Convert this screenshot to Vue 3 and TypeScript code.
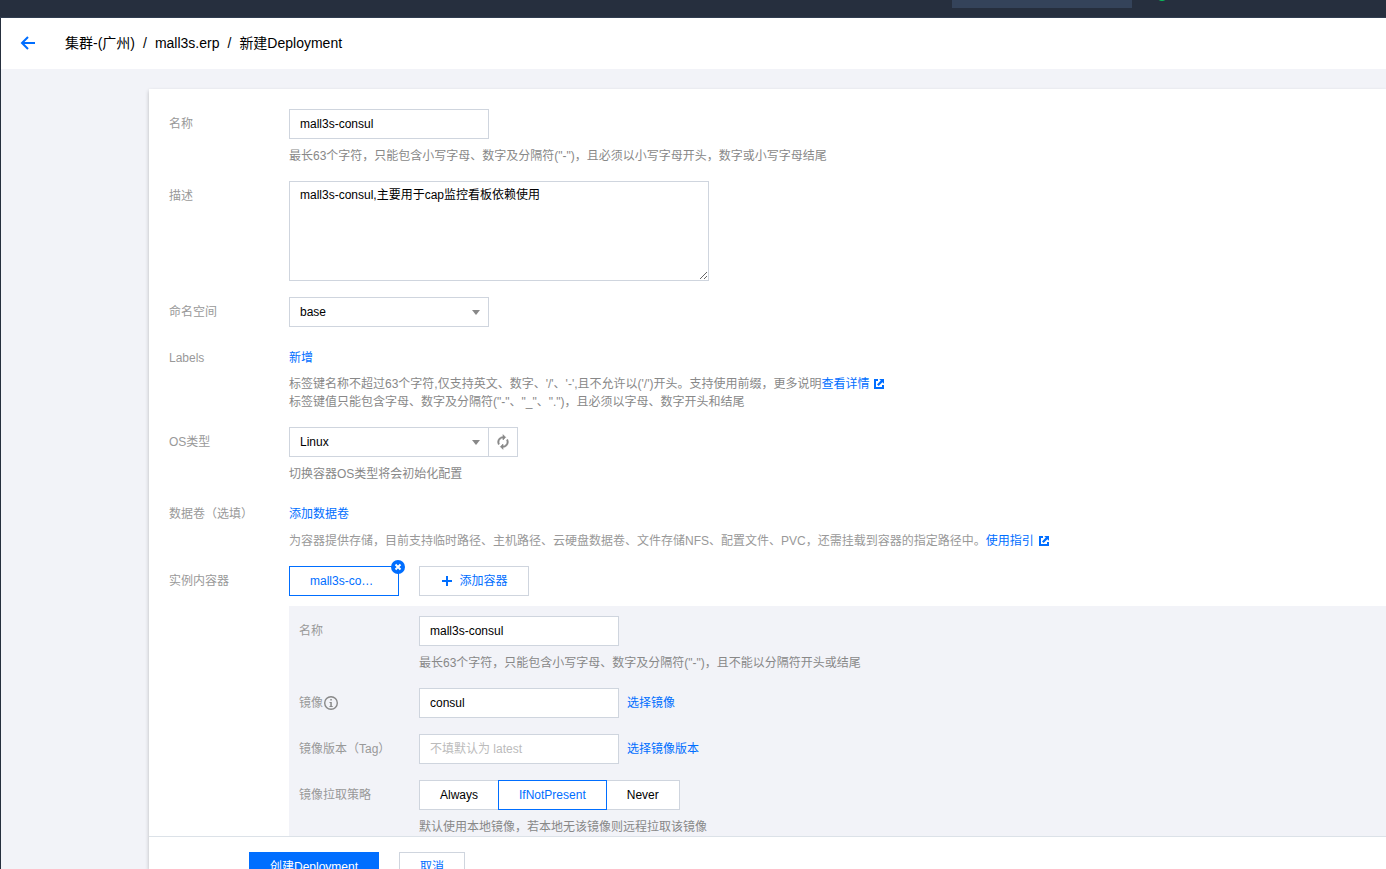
<script setup lang="ts">
import { ref } from 'vue'

const name = ref('mall3s-consul')
const description = ref('mall3s-consul,主要用于cap监控看板依赖使用')
const namespace = ref('base')
const osType = ref('Linux')
const containerName = ref('mall3s-consul')
const image = ref('consul')
const tag = ref('')
const pullPolicies: string[] = ['Always', 'IfNotPresent', 'Never']
const pullPolicy = ref('IfNotPresent')
</script>

<template>
  <div class="page">
    <div class="topbar">
      <div class="topbar-search"></div>
      <svg class="topbar-badge" width="12" height="2" viewBox="0 0 12 2" aria-hidden="true">
        <circle cx="6" cy="-5" r="6" fill="#0abf5b" />
      </svg>
    </div>

    <div class="shell">
      <header class="header">
        <button type="button" class="back" aria-label="返回">
          <svg width="16" height="16" viewBox="0 0 16 16" fill="none" stroke="#006eff" stroke-width="2">
            <path d="M8 2 2 8l6 6M2 8h13" />
          </svg>
        </button>
        <nav class="crumbs">
          <span>集群-(广州)</span><span class="slash">/</span><span>mall3s.erp</span><span class="slash">/</span><span>新建Deployment</span>
        </nav>
      </header>

      <main class="main">
        <form class="card" @submit.prevent>
          <div class="scroll">
            <div class="row">
              <label class="label" for="name">名称</label>
              <div class="field">
                <input id="name" v-model="name" class="input" type="text" />
                <p class="hint">最长63个字符，只能包含小写字母、数字及分隔符("-")，且必须以小写字母开头，数字或小写字母结尾</p>
              </div>
            </div>

            <div class="row">
              <label class="label" for="description">描述</label>
              <div class="field">
                <textarea id="description" v-model="description" class="textarea"></textarea>
              </div>
            </div>

            <div class="row">
              <label class="label" for="namespace">命名空间</label>
              <div class="field">
                <div class="select-wrap">
                  <select id="namespace" v-model="namespace" class="input select">
                    <option>base</option>
                  </select>
                  <svg class="caret" width="8" height="5" viewBox="0 0 8 5" aria-hidden="true"><path d="M0 0h8L4 5z" fill="#888" /></svg>
                </div>
              </div>
            </div>

            <div class="row">
              <span class="label">Labels</span>
              <div class="field">
                <div class="line"><a href="#">新增</a></div>
                <p class="hint hint-tight">
                  标签键名称不超过63个字符,仅支持英文、数字、'/'、'-',且不允许以('/')开头。支持使用前缀，更多说明<a href="#">查看详情<svg class="ext" width="10" height="10" viewBox="0 0 10 10" aria-hidden="true"><path d="M4 0H0v10h10V6H8v2H2V2h2zM5.200 0H10v4.800L8.400 3.200 4.600 7 3 5.400 6.800 1.600z" fill="#006eff" /></svg></a><br />
                  标签键值只能包含字母、数字及分隔符("-"、"_"、".")，且必须以字母、数字开头和结尾
                </p>
              </div>
            </div>

            <div class="row">
              <label class="label" for="os">OS类型</label>
              <div class="field">
                <div class="joined">
                  <div class="select-wrap">
                    <select id="os" v-model="osType" class="input select">
                      <option>Linux</option>
                      <option>Windows</option>
                    </select>
                    <svg class="caret" width="8" height="5" viewBox="0 0 8 5" aria-hidden="true"><path d="M0 0h8L4 5z" fill="#888" /></svg>
                  </div>
                  <button type="button" class="refresh" aria-label="刷新">
                    <svg width="16" height="16" viewBox="0 0 24 24" fill="#888" stroke="#888" stroke-width="0.900" aria-hidden="true">
                      <path d="M12 6v3l4-4-4-4v3c-4.420 0-8 3.580-8 8 0 1.570.46 3.030 1.240 4.260L6.700 14.800c-.45-.83-.7-1.790-.7-2.800 0-3.310 2.690-6 6-6z" />
                      <path d="M18.760 7.740L17.300 9.200c.44.84.7 1.790.7 2.800 0 3.310-2.690 6-6 6v-3l-4 4 4 4v-3c4.420 0 8-3.580 8-8 0-1.570-.46-3.030-1.240-4.260z" />
                    </svg>
                  </button>
                </div>
                <p class="hint">切换容器OS类型将会初始化配置</p>
              </div>
            </div>

            <div class="row">
              <span class="label">数据卷（选填）</span>
              <div class="field">
                <div class="line"><a href="#">添加数据卷</a></div>
                <p class="hint hint-note">
                  为容器提供存储，目前支持临时路径、主机路径、云硬盘数据卷、文件存储NFS、配置文件、PVC，还需挂载到容器的指定路径中。<a href="#">使用指引<svg class="ext" width="10" height="10" viewBox="0 0 10 10" aria-hidden="true"><path d="M4 0H0v10h10V6H8v2H2V2h2zM5.200 0H10v4.800L8.400 3.200 4.600 7 3 5.400 6.800 1.600z" fill="#006eff" /></svg></a>
                </p>
              </div>
            </div>

            <div class="row">
              <span class="label">实例内容器</span>
              <div class="field">
                <div class="tabs">
                  <div class="tab-wrap">
                    <button type="button" class="tab tab-active"><span class="tab-text">mall3s-consul</span></button>
                    <button type="button" class="remove" aria-label="删除容器">
                      <svg width="14" height="14" viewBox="0 0 14 14" aria-hidden="true">
                        <circle cx="7" cy="7" r="7" fill="#006eff" />
                        <path d="M4.500 4.500l5 5M9.500 4.500l-5 5" stroke="#fff" stroke-width="2" />
                      </svg>
                    </button>
                  </div>
                  <button type="button" class="tab tab-add">
                    <svg width="12" height="10" viewBox="0 0 12 10" aria-hidden="true"><path d="M7 0v10M2 5h10" stroke="#006eff" stroke-width="2" /></svg>
                    <span>添加容器</span>
                  </button>
                </div>

                <div class="container-panel">
                  <div class="row">
                    <label class="label" for="container-name">名称</label>
                    <div class="field">
                      <input id="container-name" v-model="containerName" class="input" type="text" />
                      <p class="hint">最长63个字符，只能包含小写字母、数字及分隔符("-")，且不能以分隔符开头或结尾</p>
                    </div>
                  </div>
                  <div class="row">
                    <label class="label label-icon" for="image">镜像<svg width="16" height="16" viewBox="0 0 16 16" fill="none" aria-hidden="true"><circle cx="8" cy="8" r="6.300" stroke="#888" stroke-width="1.400" /><path d="M7.300 4h1.500v1.500H7.300zM6.500 7h2.300v4h.9v1H6.500v-1h.8V8h-.8z" fill="#888" /></svg></label>
                    <div class="field inline">
                      <input id="image" v-model="image" class="input" type="text" />
                      <a href="#">选择镜像</a>
                    </div>
                  </div>
                  <div class="row">
                    <label class="label" for="tag">镜像版本（Tag）</label>
                    <div class="field inline">
                      <input id="tag" v-model="tag" class="input" type="text" placeholder="不填默认为 latest" />
                      <a href="#">选择镜像版本</a>
                    </div>
                  </div>
                  <div class="row">
                    <span id="policy-label" class="label">镜像拉取策略</span>
                    <div class="field">
                      <div class="segments" role="radiogroup" aria-labelledby="policy-label">
                        <label v-for="p in pullPolicies" :key="p" class="segment" :class="{ on: p === pullPolicy }">
                          <input v-model="pullPolicy" class="segment-input" type="radio" name="policy" :value="p" />{{ p }}
                        </label>
                      </div>
                      <p class="hint">默认使用本地镜像，若本地无该镜像则远程拉取该镜像</p>
                    </div>
                  </div>
                </div>
              </div>
            </div>
          </div>

          <footer class="footer">
            <button type="submit" class="btn btn-primary">创建Deployment</button>
            <button type="button" class="btn">取消</button>
          </footer>
        </form>
      </main>
    </div>
  </div>
</template>

<style>
body {
  margin: 0;
  overflow: hidden;
}
</style>

<style scoped>
.page,
.page * {
  box-sizing: border-box;
}
.page {
  display: flex;
  flex-direction: column;
  height: 100vh;
  overflow: hidden;
  background: #f2f3f8;
  color: #000;
  font: 12px/18px "Liberation Sans", "Noto Sans CJK SC", sans-serif;
}
button,
input,
select,
textarea {
  margin: 0;
  font: inherit;
  color: inherit;
  border-radius: 0;
  outline: none;
}
a {
  color: #006eff;
  text-decoration: none;
}

.topbar {
  flex: none;
  display: flex;
  justify-content: flex-end;
  align-items: flex-start;
  gap: 24px;
  height: 18px;
  padding-right: 218px;
  background: #262f3e;
  border-bottom: 1px solid #303d50;
}
.topbar-search {
  width: 180px;
  height: 8px;
  background: #34435a;
}
.topbar-badge {
  display: block;
}

.shell {
  flex: 1;
  min-height: 0;
  display: flex;
  flex-direction: column;
  border-left: 1px solid #262f3e;
}
.header {
  flex: none;
  display: flex;
  align-items: center;
  height: 51px;
  padding: 0 0 2px 19px;
  background: #fff;
}
.back {
  width: 16px;
  height: 16px;
  padding: 0;
  border: 0;
  background: none;
  cursor: pointer;
}
.back svg {
  display: block;
}
.crumbs {
  margin-left: 29px;
  font-size: 14px;
  line-height: 20px;
  white-space: nowrap;
}
.slash {
  margin: 0 8px;
}

.main {
  flex: 1;
  min-height: 0;
  display: flex;
  padding: 20px 0 0 148px;
}
.card {
  flex: 1;
  min-width: 0;
  display: flex;
  flex-direction: column;
  background: #fff;
  box-shadow: 0 2px 4px rgba(0, 0, 0, 0.24);
}
.scroll {
  flex: 1;
  min-height: 0;
  overflow: hidden;
  padding: 20px 0 0 20px;
}
.row {
  display: flex;
  margin-bottom: 16px;
}
.label {
  flex: none;
  width: 120px;
  color: #999;
  line-height: 30px;
  white-space: nowrap;
}
.label-icon {
  display: flex;
  align-items: center;
}
.field {
  flex: 1;
  min-width: 0;
}
.inline {
  display: flex;
  align-items: center;
  gap: 8px;
}
.line {
  line-height: 30px;
}
.input {
  display: block;
  width: 200px;
  height: 30px;
  padding: 0 10px;
  border: 1px solid #cfd5de;
  background: #fff;
}
.input::placeholder {
  color: #bbb;
}
.textarea {
  display: block;
  width: 420px;
  height: 100px;
  padding: 4px 10px;
  border: 1px solid #cfd5de;
  background: #fff;
  resize: both;
}
.select-wrap {
  position: relative;
  width: 200px;
}
.select {
  appearance: none;
}
.caret {
  position: absolute;
  right: 9px;
  top: 13px;
  pointer-events: none;
}
.joined {
  display: flex;
}
.refresh {
  display: flex;
  align-items: center;
  justify-content: center;
  width: 30px;
  height: 30px;
  margin-left: -1px;
  padding: 0;
  border: 1px solid #cfd5de;
  background: #fff;
}
.hint {
  margin: 8px 0 0;
  color: #888;
}
.hint-tight {
  margin-top: 2px;
}
.hint-note {
  margin-top: 3px;
  color: #999;
}
.ext {
  margin-left: 5px;
  vertical-align: -1px;
}

.tabs {
  display: flex;
  gap: 20px;
}
.tab-wrap {
  position: relative;
}
.tab {
  display: flex;
  align-items: center;
  justify-content: center;
  width: 110px;
  height: 30px;
  padding: 0 20px;
  border: 1px solid #cfd5de;
  background: #fff;
  color: #006eff;
  white-space: nowrap;
}
.tab-active {
  border-color: #006eff;
  justify-content: flex-start;
}
.tab-text {
  overflow: hidden;
  text-overflow: ellipsis;
}
.tab-add {
  gap: 7px;
}
.remove {
  position: absolute;
  top: -6px;
  right: -6px;
  width: 14px;
  height: 14px;
  padding: 0;
  border: 0;
  background: none;
}
.remove svg {
  display: block;
}
.container-panel {
  margin-top: 10px;
  padding: 10px;
  background: #f2f3f8;
}

.segments {
  display: flex;
}
.segment {
  position: relative;
  height: 30px;
  padding: 0 20px;
  border: 1px solid #cfd5de;
  background: #fff;
  line-height: 28px;
  cursor: pointer;
}
.segment + .segment {
  margin-left: -1px;
}
.segment.on {
  z-index: 1;
  border-color: #006eff;
  color: #006eff;
}
.segment-input {
  position: absolute;
  inset: 0;
  opacity: 0;
}

.footer {
  flex: none;
  display: flex;
  align-items: flex-start;
  gap: 20px;
  height: 33px;
  padding: 15px 0 0 100px;
  overflow: hidden;
  border-top: 1px solid #dce2e8;
  background: #fff;
}
.btn {
  flex: none;
  height: 30px;
  padding: 0 20px;
  border: 1px solid #cfd5de;
  background: #fff;
  color: #006eff;
}
.btn-primary {
  border-color: #006eff;
  background: #006eff;
  color: #fff;
}
</style>
